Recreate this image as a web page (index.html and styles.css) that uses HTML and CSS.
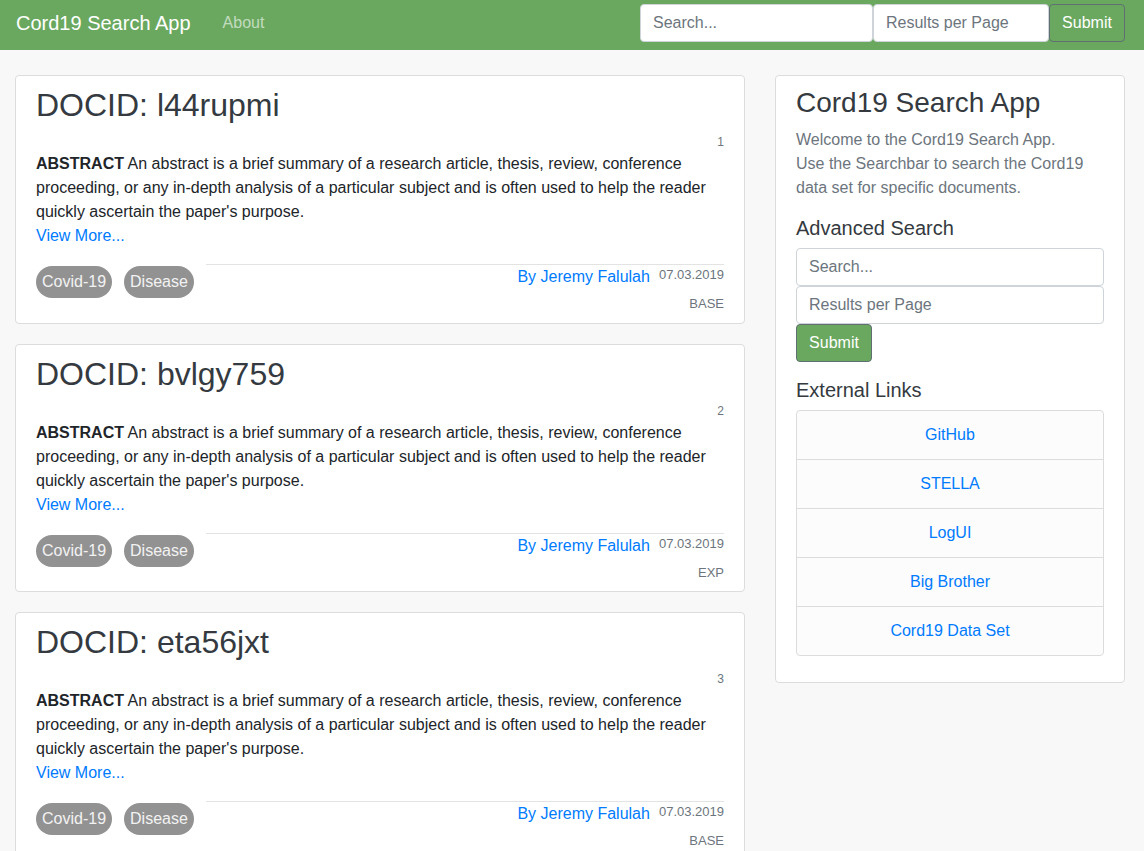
FILE: index.html
```html
<!DOCTYPE html>
<html lang="en">
<head>
<meta charset="utf-8">
<title>Cord19 Search App</title>
<link rel="stylesheet" href="styles.css">
</head>
<body>
<nav class="navbar">
  <a class="brand" href="#">Cord19 Search App</a>
  <a class="nav-link" href="#">About</a>
  <form class="nav-form">
    <input class="input nav-search" type="text" placeholder="Search...">
    <input class="input nav-rpp" type="text" placeholder="Results per Page">
    <button class="btn" type="button">Submit</button>
  </form>
</nav>

<main class="layout">
  <section class="results">
    <article class="card doc">
      <h1 class="doc-title">DOCID: l44rupmi</h1>
      <div class="doc-rank">1</div>
      <p class="doc-abstract"><b>ABSTRACT</b> An abstract is a brief summary of a research article, thesis, review, conference proceeding, or any in-depth analysis of a particular subject and is often used to help the reader quickly ascertain the paper's purpose.<a class="more" href="#">View More...</a></p>
      <div class="doc-footer">
        <div class="tags"><span class="tag">Covid-19</span><span class="tag">Disease</span></div>
        <div class="meta">
          <div class="meta-line"><a href="#" class="author">By Jeremy Falulah</a><span class="date">07.03.2019</span></div>
          <div class="system">BASE</div>
        </div>
      </div>
    </article>

    <article class="card doc">
      <h1 class="doc-title">DOCID: bvlgy759</h1>
      <div class="doc-rank">2</div>
      <p class="doc-abstract"><b>ABSTRACT</b> An abstract is a brief summary of a research article, thesis, review, conference proceeding, or any in-depth analysis of a particular subject and is often used to help the reader quickly ascertain the paper's purpose.<a class="more" href="#">View More...</a></p>
      <div class="doc-footer">
        <div class="tags"><span class="tag">Covid-19</span><span class="tag">Disease</span></div>
        <div class="meta">
          <div class="meta-line"><a href="#" class="author">By Jeremy Falulah</a><span class="date">07.03.2019</span></div>
          <div class="system">EXP</div>
        </div>
      </div>
    </article>

    <article class="card doc">
      <h1 class="doc-title">DOCID: eta56jxt</h1>
      <div class="doc-rank">3</div>
      <p class="doc-abstract"><b>ABSTRACT</b> An abstract is a brief summary of a research article, thesis, review, conference proceeding, or any in-depth analysis of a particular subject and is often used to help the reader quickly ascertain the paper's purpose.<a class="more" href="#">View More...</a></p>
      <div class="doc-footer">
        <div class="tags"><span class="tag">Covid-19</span><span class="tag">Disease</span></div>
        <div class="meta">
          <div class="meta-line"><a href="#" class="author">By Jeremy Falulah</a><span class="date">07.03.2019</span></div>
          <div class="system">BASE</div>
        </div>
      </div>
    </article>
  </section>

  <aside class="card sidebar">
    <h2 class="side-title">Cord19 Search App</h2>
    <p class="side-text">Welcome to the Cord19 Search App.<br>Use the Searchbar to search the Cord19 data set for specific documents.</p>
    <h3 class="side-sub">Advanced Search</h3>
    <form class="side-form">
      <input class="input" type="text" placeholder="Search...">
      <input class="input" type="text" placeholder="Results per Page">
      <button class="btn side-btn" type="button">Submit</button>
    </form>
    <h3 class="side-sub links-title">External Links</h3>
    <ul class="list-group">
      <li><a href="#">GitHub</a></li>
      <li><a href="#">STELLA</a></li>
      <li><a href="#">LogUI</a></li>
      <li><a href="#">Big Brother</a></li>
      <li><a href="#">Cord19 Data Set</a></li>
    </ul>
  </aside>
</main>
</body>
</html>
```

FILE: styles.css
```css
* { box-sizing: border-box; }

body {
  margin: 0;
  background: #f8f8f8;
  font-family: "Liberation Sans", Arial, sans-serif;
  font-size: 16px;
  line-height: 24px;
  color: #212529;
}

a { color: #007bff; text-decoration: none; }

.navbar {
  height: 50px;
  background: #6aa85f;
  display: flex;
  align-items: flex-start;
  padding: 4px 19px 8px 16px;
}

.brand {
  color: #fff;
  font-size: 20px;
  line-height: 38px;
}

.nav-link {
  color: rgba(255, 255, 255, 0.6);
  margin-left: 32px;
  line-height: 38px;
}

.nav-form {
  margin-left: auto;
  display: flex;
}

.input {
  display: block;
  height: 38px;
  padding: 0 12px;
  font-family: inherit;
  font-size: 16px;
  color: #495057;
  background: #fff;
  border: 1px solid #ced4da;
  border-radius: 4px;
  outline: none;
}

.input::placeholder { color: #6c757d; }

.nav-search { width: 233px; }
.nav-rpp { width: 176px; }

.btn {
  height: 38px;
  width: 76px;
  padding: 0;
  font-family: inherit;
  font-size: 16px;
  color: #fff;
  background: #6aa85f;
  border: 1px solid #5f6f72;
  border-radius: 4px;
}

.layout {
  display: grid;
  grid-template-columns: 1fr 350px;
  column-gap: 30px;
  align-items: start;
  padding: 25px 19px 0 15px;
}

.results {
  display: flex;
  flex-direction: column;
  gap: 20px;
}

.card {
  background: #fff;
  border: 1px solid #dcdcdc;
  border-radius: 4px;
}

.doc {
  padding: 10px 20px 8.5px;
}

.doc-title {
  margin: 0;
  font-size: 32px;
  line-height: 38px;
  font-weight: 400;
  color: #343a40;
}

.doc-rank {
  margin-top: 8px;
  text-align: right;
  font-size: 12px;
  line-height: 20px;
  color: #6c757d;
}

.doc-abstract {
  margin: 0;
}

.more { display: block; }

.doc-footer {
  display: flex;
  align-items: flex-start;
  margin-top: 16px;
}

.tags {
  display: flex;
  gap: 12px;
  margin-top: 2px;
}

.tag {
  display: block;
  height: 32px;
  line-height: 31px;
  padding: 0 6px;
  border-radius: 16px;
  background: #929292;
  color: #f2f2f2;
}

.meta {
  flex: 1;
  margin-left: 12px;
  border-top: 1px solid #e3e3e3;
  text-align: right;
}

.meta-line {
  display: flex;
  justify-content: flex-end;
  align-items: flex-start;
  line-height: 24px;
}

.author { padding-right: 1px; }

.date {
  margin-left: 8px;
  padding-top: 1px;
  font-size: 13px;
  line-height: 18px;
  color: #6c757d;
}

.system {
  margin-top: 5px;
  font-size: 13px;
  line-height: 20px;
  color: #6c757d;
}

.sidebar {
  padding: 10px 20px 26px;
}

.side-title {
  margin: 0;
  font-size: 28px;
  line-height: 34px;
  font-weight: 400;
  color: #343a40;
}

.side-text {
  margin: 8px 0 0;
  color: #6c757d;
}

.side-sub {
  margin: 16px 0 0;
  font-size: 20px;
  line-height: 24px;
  font-weight: 400;
  color: #343a40;
}

.side-form {
  margin-top: 8px;
}

.side-form .input { width: 100%; }

.side-btn { display: block; }

.links-title { margin-top: 16px; }

.list-group {
  list-style: none;
  margin: 8px 0 0;
  padding: 0;
  border: 1px solid #dcdcdc;
  border-radius: 4px;
  background: #fcfcfc;
}

.list-group li {
  height: 49px;
  line-height: 48px;
  text-align: center;
  border-top: 1px solid #dcdcdc;
}

.list-group li:first-child {
  border-top: 0;
  height: 48px;
}
```
